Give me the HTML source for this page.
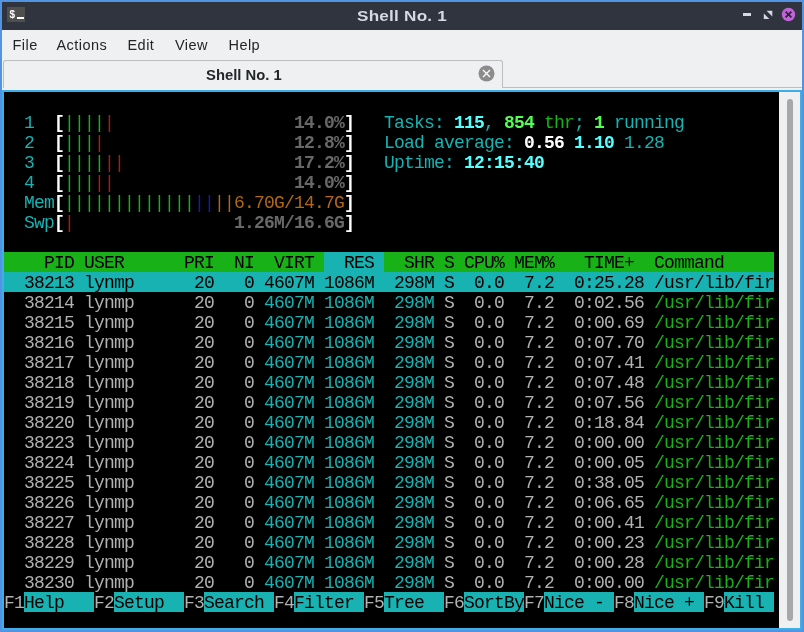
<!DOCTYPE html>
<html><head><meta charset="utf-8">
<style>
*{margin:0;padding:0;box-sizing:border-box}
html,body{width:804px;height:632px;overflow:hidden;background:#5294e2}
body{position:relative;font-family:"Liberation Sans",sans-serif;will-change:transform}
.abs{position:absolute}
#title{position:absolute;left:2px;top:2px;width:800px;height:28px;background:#2f343f}
#title .tt{position:absolute;left:354.7px;top:0;color:#d3dae3;font-weight:bold;font-size:15px;letter-spacing:0.2px;line-height:28px;transform:scaleX(1.142);transform-origin:0 0}
#menu{position:absolute;left:2px;top:30px;width:800px;height:60px;background:#eff0f1}
.mi{position:absolute;top:0.5px;font-size:14.5px;letter-spacing:0.45px;color:#232629;line-height:28px}
#term{position:absolute;left:2px;top:90px;width:800px;height:540px;border:2px solid #3daee9;background:#000}
#sb{position:absolute;left:775px;top:0;width:21px;height:536px;background:#eff0f1}
.rc{position:absolute;height:20px}
.t{position:absolute;font-family:"Liberation Mono",monospace;font-size:18px;letter-spacing:-0.8016px;line-height:20px;white-space:pre}
.b{font-weight:bold}
</style></head><body>
<div id="title">
  <div class="abs" style="left:5px;top:5.2px;width:18px;height:15.2px;background:#4f4f4f"></div>
  <div class="abs" style="left:7.5px;top:5px;color:#fff;font-size:10px;font-weight:bold;line-height:15px">$</div>
  <div class="abs" style="left:15px;top:14.5px;width:7px;height:2px;background:#fff"></div>
  <div class="tt">Shell No. 1</div>
  <div class="abs" style="left:741px;top:11.2px;width:8px;height:3px;background:#d3dae3"></div>
  <svg class="abs" style="left:760px;top:7px" width="14" height="14" viewBox="0 0 14 14"><polygon points="4.6,1.7 10.3,1.7 10.3,7.4" fill="#d3dae3"/><polygon points="1.8,4.4 1.8,10.1 7.3,10.1" fill="#d3dae3"/></svg>
  <svg class="abs" style="left:779px;top:5px" width="15" height="15" viewBox="0 0 15 15"><circle cx="7.5" cy="7.5" r="6.7" fill="#c262db"/><path d="M4.6 4.6L10.4 10.4M10.4 4.6L4.6 10.4" stroke="#252a2a" stroke-width="1.8"/></svg>
</div>
<div id="menu">
  <div class="mi" style="left:10.5px">File</div>
  <div class="mi" style="left:54.5px">Actions</div>
  <div class="mi" style="left:125.5px">Edit</div>
  <div class="mi" style="left:173px">View</div>
  <div class="mi" style="left:226.5px">Help</div>
  <div class="abs" style="left:500px;top:57px;width:300px;height:1px;background:#bcbebf"></div>
  <div class="abs" style="left:1px;top:30px;width:500px;height:28px;border:1px solid #bcbebf;border-bottom:none;border-radius:3px 3px 0 0;background:#eff0f1"></div>
  <div class="abs" style="left:203.5px;top:30.8px;font-weight:bold;font-size:14px;line-height:28px;color:#232629;transform:scaleX(1.058);transform-origin:0 0">Shell No. 1</div>
  <svg class="abs" style="left:476px;top:35px" width="17" height="17" viewBox="0 0 17 17"><circle cx="8.5" cy="8.5" r="8" fill="#8c8c8c"/><path d="M5 5L12 12M12 5L5 12" stroke="#fff" stroke-width="1.3"/></svg>
</div>
<div id="term">
<div id="sb"><div class="abs" style="left:8px;top:7px;width:6px;height:522px;border-radius:3px;background:#a8a8a8"></div></div>
</div>
<div class="rc" style="left:4px;top:252px;width:770px;background:#18b218"></div>
<div class="rc" style="left:324px;top:252px;width:60px;background:#18b2b2"></div>
<div class="rc" style="left:4px;top:272px;width:770px;background:#18b2b2"></div>
<div class="rc" style="left:24px;top:592px;width:70px;background:#18b2b2"></div>
<div class="rc" style="left:114px;top:592px;width:70px;background:#18b2b2"></div>
<div class="rc" style="left:204px;top:592px;width:70px;background:#18b2b2"></div>
<div class="rc" style="left:294px;top:592px;width:70px;background:#18b2b2"></div>
<div class="rc" style="left:384px;top:592px;width:60px;background:#18b2b2"></div>
<div class="rc" style="left:464px;top:592px;width:60px;background:#18b2b2"></div>
<div class="rc" style="left:544px;top:592px;width:70px;background:#18b2b2"></div>
<div class="rc" style="left:634px;top:592px;width:70px;background:#18b2b2"></div>
<div class="rc" style="left:724px;top:592px;width:50px;background:#18b2b2"></div>
<div class="t" style="left:24px;top:113px;color:#18b2b2">1</div>
<div class="t b" style="left:54px;top:113px;color:#ffffff">[</div>
<div class="t" style="left:64px;top:113px;color:#18b218">||||</div>
<div class="t" style="left:104px;top:113px;color:#b21818">|</div>
<div class="t b" style="left:294px;top:113px;color:#686868">14.0%</div>
<div class="t b" style="left:344px;top:113px;color:#ffffff">]</div>
<div class="t" style="left:384px;top:113px;color:#18b2b2">Tasks: </div>
<div class="t b" style="left:454px;top:113px;color:#54ffff">115</div>
<div class="t" style="left:484px;top:113px;color:#18b2b2">, </div>
<div class="t b" style="left:504px;top:113px;color:#54ff54">854</div>
<div class="t" style="left:544px;top:113px;color:#18b218">thr</div>
<div class="t" style="left:574px;top:113px;color:#18b2b2">; </div>
<div class="t b" style="left:594px;top:113px;color:#54ff54">1</div>
<div class="t" style="left:614px;top:113px;color:#18b2b2">running</div>
<div class="t" style="left:24px;top:133px;color:#18b2b2">2</div>
<div class="t b" style="left:54px;top:133px;color:#ffffff">[</div>
<div class="t" style="left:64px;top:133px;color:#18b218">|||</div>
<div class="t" style="left:94px;top:133px;color:#b21818">|</div>
<div class="t b" style="left:294px;top:133px;color:#686868">12.8%</div>
<div class="t b" style="left:344px;top:133px;color:#ffffff">]</div>
<div class="t" style="left:384px;top:133px;color:#18b2b2">Load average: </div>
<div class="t b" style="left:524px;top:133px;color:#ffffff">0.56 </div>
<div class="t b" style="left:574px;top:133px;color:#54ffff">1.10 </div>
<div class="t" style="left:624px;top:133px;color:#18b2b2">1.28</div>
<div class="t" style="left:24px;top:153px;color:#18b2b2">3</div>
<div class="t b" style="left:54px;top:153px;color:#ffffff">[</div>
<div class="t" style="left:64px;top:153px;color:#18b218">||||</div>
<div class="t" style="left:104px;top:153px;color:#b21818">||</div>
<div class="t b" style="left:294px;top:153px;color:#686868">17.2%</div>
<div class="t b" style="left:344px;top:153px;color:#ffffff">]</div>
<div class="t" style="left:384px;top:153px;color:#18b2b2">Uptime: </div>
<div class="t b" style="left:464px;top:153px;color:#54ffff">12:15:40</div>
<div class="t" style="left:24px;top:173px;color:#18b2b2">4</div>
<div class="t b" style="left:54px;top:173px;color:#ffffff">[</div>
<div class="t" style="left:64px;top:173px;color:#18b218">|||</div>
<div class="t" style="left:94px;top:173px;color:#b21818">||</div>
<div class="t b" style="left:294px;top:173px;color:#686868">14.0%</div>
<div class="t b" style="left:344px;top:173px;color:#ffffff">]</div>
<div class="t" style="left:24px;top:193px;color:#18b2b2">Mem</div>
<div class="t b" style="left:54px;top:193px;color:#ffffff">[</div>
<div class="t" style="left:64px;top:193px;color:#18b218">|||||||||||||</div>
<div class="t" style="left:194px;top:193px;color:#1818b2">||</div>
<div class="t" style="left:214px;top:193px;color:#b26818">||</div>
<div class="t" style="left:234px;top:193px;color:#b26818">6.70G/14.7G</div>
<div class="t b" style="left:344px;top:193px;color:#ffffff">]</div>
<div class="t" style="left:24px;top:213px;color:#18b2b2">Swp</div>
<div class="t b" style="left:54px;top:213px;color:#ffffff">[</div>
<div class="t" style="left:64px;top:213px;color:#b21818">|</div>
<div class="t b" style="left:234px;top:213px;color:#686868">1.26M/16.6G</div>
<div class="t b" style="left:344px;top:213px;color:#ffffff">]</div>
<div class="t" style="left:4px;top:253px;color:#000000">    PID USER      PRI  NI  VIRT   RES   SHR S CPU% MEM%   TIME+  Command</div>
<div class="t" style="left:4px;top:273px;color:#000000">  38213 lynmp      20   0 4607M 1086M  298M S  0.0  7.2  0:25.28 /usr/lib/fir</div>
<div class="t" style="left:4px;top:293px;color:#b2b2b2">  38214 lynmp      20   0 </div>
<div class="t" style="left:264px;top:293px;color:#18b2b2">4607M 1086M  298M </div>
<div class="t" style="left:444px;top:293px;color:#b2b2b2">S  0.0  7.2  0:02.56 </div>
<div class="t" style="left:654px;top:293px;color:#18b218">/usr/lib/fir</div>
<div class="t" style="left:4px;top:313px;color:#b2b2b2">  38215 lynmp      20   0 </div>
<div class="t" style="left:264px;top:313px;color:#18b2b2">4607M 1086M  298M </div>
<div class="t" style="left:444px;top:313px;color:#b2b2b2">S  0.0  7.2  0:00.69 </div>
<div class="t" style="left:654px;top:313px;color:#18b218">/usr/lib/fir</div>
<div class="t" style="left:4px;top:333px;color:#b2b2b2">  38216 lynmp      20   0 </div>
<div class="t" style="left:264px;top:333px;color:#18b2b2">4607M 1086M  298M </div>
<div class="t" style="left:444px;top:333px;color:#b2b2b2">S  0.0  7.2  0:07.70 </div>
<div class="t" style="left:654px;top:333px;color:#18b218">/usr/lib/fir</div>
<div class="t" style="left:4px;top:353px;color:#b2b2b2">  38217 lynmp      20   0 </div>
<div class="t" style="left:264px;top:353px;color:#18b2b2">4607M 1086M  298M </div>
<div class="t" style="left:444px;top:353px;color:#b2b2b2">S  0.0  7.2  0:07.41 </div>
<div class="t" style="left:654px;top:353px;color:#18b218">/usr/lib/fir</div>
<div class="t" style="left:4px;top:373px;color:#b2b2b2">  38218 lynmp      20   0 </div>
<div class="t" style="left:264px;top:373px;color:#18b2b2">4607M 1086M  298M </div>
<div class="t" style="left:444px;top:373px;color:#b2b2b2">S  0.0  7.2  0:07.48 </div>
<div class="t" style="left:654px;top:373px;color:#18b218">/usr/lib/fir</div>
<div class="t" style="left:4px;top:393px;color:#b2b2b2">  38219 lynmp      20   0 </div>
<div class="t" style="left:264px;top:393px;color:#18b2b2">4607M 1086M  298M </div>
<div class="t" style="left:444px;top:393px;color:#b2b2b2">S  0.0  7.2  0:07.56 </div>
<div class="t" style="left:654px;top:393px;color:#18b218">/usr/lib/fir</div>
<div class="t" style="left:4px;top:413px;color:#b2b2b2">  38220 lynmp      20   0 </div>
<div class="t" style="left:264px;top:413px;color:#18b2b2">4607M 1086M  298M </div>
<div class="t" style="left:444px;top:413px;color:#b2b2b2">S  0.0  7.2  0:18.84 </div>
<div class="t" style="left:654px;top:413px;color:#18b218">/usr/lib/fir</div>
<div class="t" style="left:4px;top:433px;color:#b2b2b2">  38223 lynmp      20   0 </div>
<div class="t" style="left:264px;top:433px;color:#18b2b2">4607M 1086M  298M </div>
<div class="t" style="left:444px;top:433px;color:#b2b2b2">S  0.0  7.2  0:00.00 </div>
<div class="t" style="left:654px;top:433px;color:#18b218">/usr/lib/fir</div>
<div class="t" style="left:4px;top:453px;color:#b2b2b2">  38224 lynmp      20   0 </div>
<div class="t" style="left:264px;top:453px;color:#18b2b2">4607M 1086M  298M </div>
<div class="t" style="left:444px;top:453px;color:#b2b2b2">S  0.0  7.2  0:00.05 </div>
<div class="t" style="left:654px;top:453px;color:#18b218">/usr/lib/fir</div>
<div class="t" style="left:4px;top:473px;color:#b2b2b2">  38225 lynmp      20   0 </div>
<div class="t" style="left:264px;top:473px;color:#18b2b2">4607M 1086M  298M </div>
<div class="t" style="left:444px;top:473px;color:#b2b2b2">S  0.0  7.2  0:38.05 </div>
<div class="t" style="left:654px;top:473px;color:#18b218">/usr/lib/fir</div>
<div class="t" style="left:4px;top:493px;color:#b2b2b2">  38226 lynmp      20   0 </div>
<div class="t" style="left:264px;top:493px;color:#18b2b2">4607M 1086M  298M </div>
<div class="t" style="left:444px;top:493px;color:#b2b2b2">S  0.0  7.2  0:06.65 </div>
<div class="t" style="left:654px;top:493px;color:#18b218">/usr/lib/fir</div>
<div class="t" style="left:4px;top:513px;color:#b2b2b2">  38227 lynmp      20   0 </div>
<div class="t" style="left:264px;top:513px;color:#18b2b2">4607M 1086M  298M </div>
<div class="t" style="left:444px;top:513px;color:#b2b2b2">S  0.0  7.2  0:00.41 </div>
<div class="t" style="left:654px;top:513px;color:#18b218">/usr/lib/fir</div>
<div class="t" style="left:4px;top:533px;color:#b2b2b2">  38228 lynmp      20   0 </div>
<div class="t" style="left:264px;top:533px;color:#18b2b2">4607M 1086M  298M </div>
<div class="t" style="left:444px;top:533px;color:#b2b2b2">S  0.0  7.2  0:00.23 </div>
<div class="t" style="left:654px;top:533px;color:#18b218">/usr/lib/fir</div>
<div class="t" style="left:4px;top:553px;color:#b2b2b2">  38229 lynmp      20   0 </div>
<div class="t" style="left:264px;top:553px;color:#18b2b2">4607M 1086M  298M </div>
<div class="t" style="left:444px;top:553px;color:#b2b2b2">S  0.0  7.2  0:00.28 </div>
<div class="t" style="left:654px;top:553px;color:#18b218">/usr/lib/fir</div>
<div class="t" style="left:4px;top:573px;color:#b2b2b2">  38230 lynmp      20   0 </div>
<div class="t" style="left:264px;top:573px;color:#18b2b2">4607M 1086M  298M </div>
<div class="t" style="left:444px;top:573px;color:#b2b2b2">S  0.0  7.2  0:00.00 </div>
<div class="t" style="left:654px;top:573px;color:#18b218">/usr/lib/fir</div>
<div class="t" style="left:4px;top:593px;color:#b2b2b2">F1</div>
<div class="t" style="left:24px;top:593px;color:#000000">Help</div>
<div class="t" style="left:94px;top:593px;color:#b2b2b2">F2</div>
<div class="t" style="left:114px;top:593px;color:#000000">Setup</div>
<div class="t" style="left:184px;top:593px;color:#b2b2b2">F3</div>
<div class="t" style="left:204px;top:593px;color:#000000">Search</div>
<div class="t" style="left:274px;top:593px;color:#b2b2b2">F4</div>
<div class="t" style="left:294px;top:593px;color:#000000">Filter</div>
<div class="t" style="left:364px;top:593px;color:#b2b2b2">F5</div>
<div class="t" style="left:384px;top:593px;color:#000000">Tree</div>
<div class="t" style="left:444px;top:593px;color:#b2b2b2">F6</div>
<div class="t" style="left:464px;top:593px;color:#000000">SortBy</div>
<div class="t" style="left:524px;top:593px;color:#b2b2b2">F7</div>
<div class="t" style="left:544px;top:593px;color:#000000">Nice -</div>
<div class="t" style="left:614px;top:593px;color:#b2b2b2">F8</div>
<div class="t" style="left:634px;top:593px;color:#000000">Nice +</div>
<div class="t" style="left:704px;top:593px;color:#b2b2b2">F9</div>
<div class="t" style="left:724px;top:593px;color:#000000">Kill</div>
</body></html>
